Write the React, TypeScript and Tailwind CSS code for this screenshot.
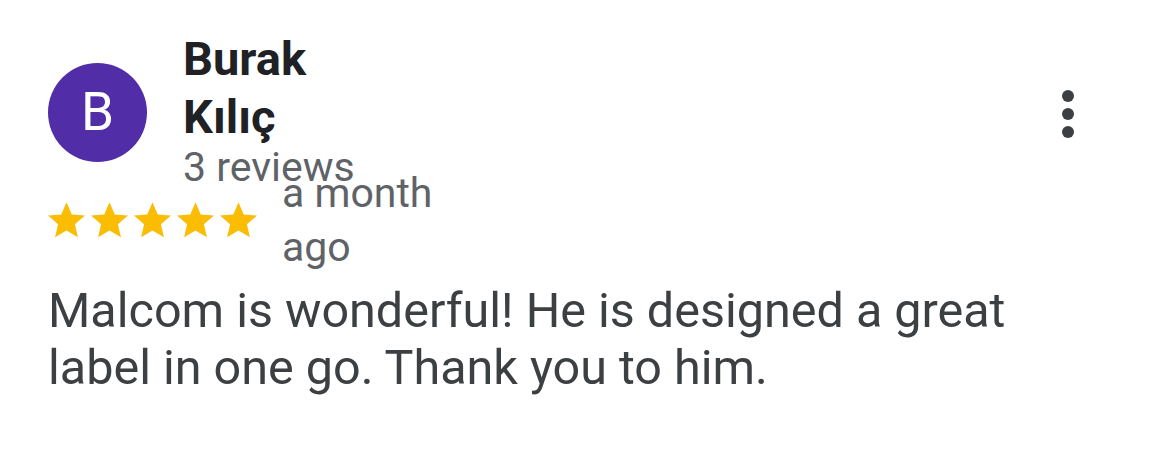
const Star = () => (
  <svg width="37" height="36" viewBox="2 2 20 19.3" className="shrink-0">
    <path
      fill="#fbbc04"
      d="M12 17.27L18.18 21l-1.64-7.03L22 9.24l-7.19-.61L12 2 9.19 8.63 2 9.24l5.46 4.73L5.82 21z"
    />
  </svg>
)

function MoreButton() {
  return (
    <svg width="72" height="72" viewBox="0 0 24 24" className="shrink-0 mt-[48px]">
      <circle cx="12" cy="6" r="2" fill="#3c4043" />
      <circle cx="12" cy="12" r="2" fill="#3c4043" />
      <circle cx="12" cy="18" r="2" fill="#3c4043" />
    </svg>
  )
}

function ReviewCard() {
  return (
    <div className="px-[48px] pt-[30px] font-['Roboto',sans-serif]">
      <div className="flex items-start">
        <div className="mt-[33px] w-[99px] h-[99px] rounded-full bg-[#512da8] flex items-center justify-center shrink-0">
          <span className="text-white text-[53px] leading-none">B</span>
        </div>

        <div className="flex-1 ml-[36px]">
          <div className="w-[180px] text-[47px] font-bold leading-[58px] text-[#202124]">
            Burak Kılıç
          </div>
          <div className="text-[41px] leading-[43px] text-[#5f6368] whitespace-nowrap">
            3 reviews
          </div>
        </div>

        <MoreButton />
      </div>

      <div className="flex items-center gap-[25px] -mt-[23px]">
        <div className="flex gap-[6px]">
          <Star />
          <Star />
          <Star />
          <Star />
          <Star />
        </div>
        <div className="w-[175px] text-[41px] leading-[54px] text-[#5f6368]">
          a month ago
        </div>
      </div>

      <p className="mt-[8px] text-[48.5px] leading-[57px] text-[#3c4043]">
        Malcom is wonderful! He is designed a great label in one go. Thank you to him.
      </p>
    </div>
  )
}

export default function App() {
  return (
    <div className="w-[1152px] h-[457px] bg-white overflow-hidden">
      <ReviewCard />
    </div>
  )
}
